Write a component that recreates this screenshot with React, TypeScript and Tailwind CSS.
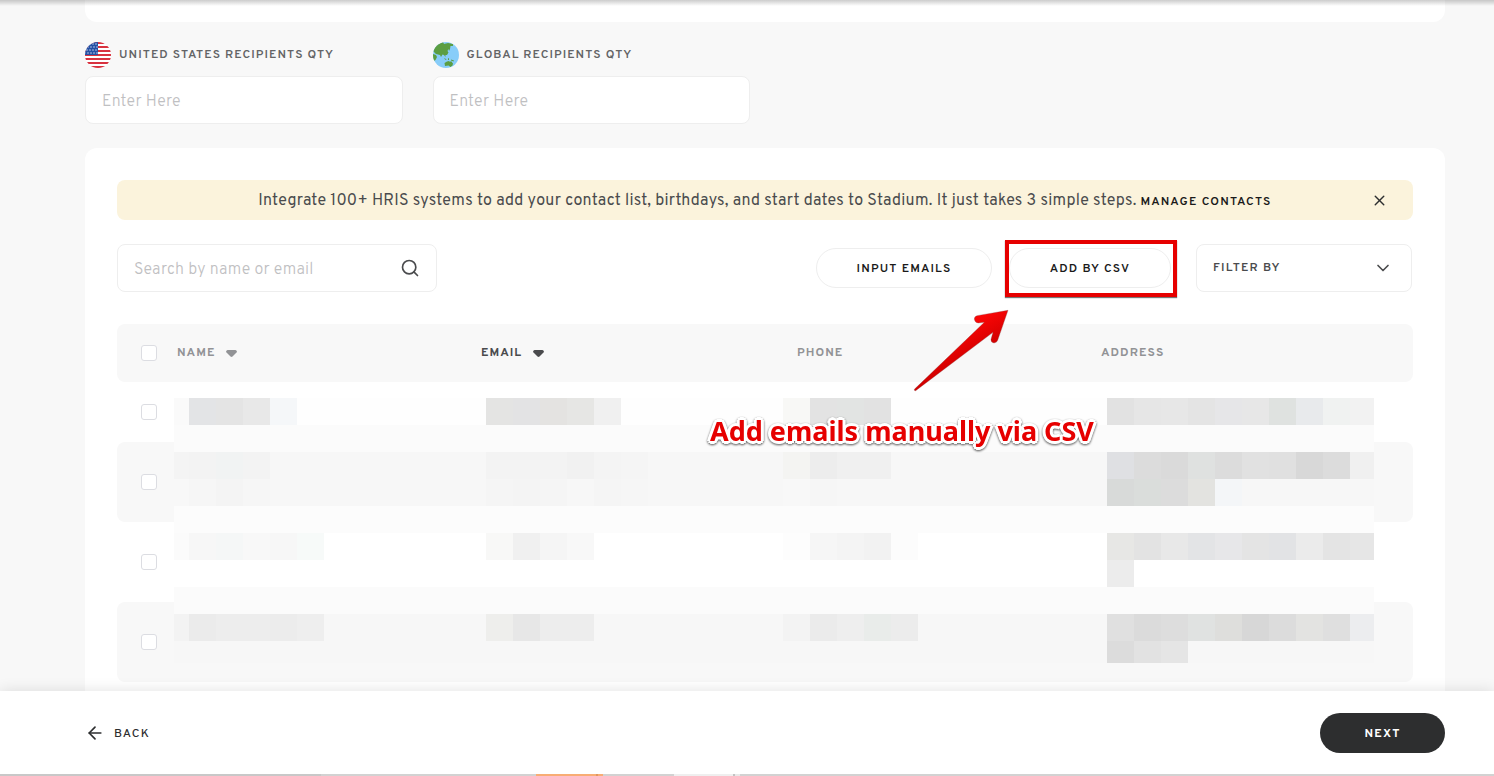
import { useState } from 'react';
import { ArrowLeft, ChevronDown, Search, X } from 'lucide-react';

interface Strip {
  x: number;
  y: number;
  h?: number;
  colors: string[];
}

const CELL = 27;

// Full-width bands of the redacted area, as [y, height, color]
const bands: [number, number, string][] = [
  [0, 27, '#fefefe'],
  [27, 27, '#fbfbfb'],
  [54, 54, '#f7f7f7'],
  [108, 27, '#fcfcfc'],
  [135, 54, '#ffffff'],
  [189, 27, '#fbfbfb'],
  [216, 49, '#f7f7f7'],
];

const strips: Strip[] = [
  // name
  { x: -12, y: 0, colors: ['#fafafa', '#e3e4e6', '#e4e4e4', '#e8e8e8', '#f5f7f9'] },
  { x: -12, y: 54, colors: ['#f4f4f4', '#f3f3f3', '#f1f3f3', '#f3f3f3'] },
  { x: -12, y: 81, colors: ['#f8f8f8', '#f6f6f6', '#f4f4f4', '#f6f6f6'] },
  { x: -12, y: 135, colors: ['#fbfbfb', '#f7f7f7', '#f5f7f7', '#f8f8f8', '#f7f7f7', '#f7faf9'] },
  { x: -12, y: 216, colors: ['#f3f3f3', '#ebebeb', '#ededed', '#ededed', '#ececec', '#eeeeee'] },
  // email
  { x: 312, y: 0, colors: ['#e4e4e3', '#e3e3e4', '#e4e3e1', '#e6e6e4', '#f0f0f0'] },
  { x: 312, y: 54, colors: ['#f3f3f3', '#f3f3f3', '#f3f3f3', '#f1f1f1', '#f4f4f4', '#f5f5f5'] },
  { x: 312, y: 81, colors: ['#f5f5f5', '#f4f4f4', '#f5f5f5', '#f7f7f7', '#f5f5f5', '#f6f6f6'] },
  { x: 312, y: 135, colors: ['#f8f8f7', '#f0f0f0', '#f5f5f5', '#f8f8f8'] },
  { x: 312, y: 216, colors: ['#eeeeec', '#e7e7e7', '#ededed', '#ededed'] },
  // phone
  { x: 609, y: 0, colors: ['#f8f8f6', '#e3e3e3', '#e2e4e3', '#e2e2e2'] },
  { x: 609, y: 54, colors: ['#f4f4f2', '#ededed', '#f0f0f0', '#f0f0f0'] },
  { x: 609, y: 81, colors: ['#f8f8f8', '#f6f6f6', '#f7f7f7', '#f7f7f7'] },
  { x: 609, y: 135, colors: ['#fdfdfd', '#f6f6f6', '#f4f4f4', '#f2f2f2', '#fcfcfc'] },
  { x: 609, y: 216, colors: ['#f3f3f3', '#ebebeb', '#eeeeee', '#e9ecea', '#ececec'] },
  // address
  { x: 933, y: 0, colors: ['#e2e2e2', '#e6e6e6', '#e7e7e7', '#e4e4e4', '#e6e6e8', '#e7e7e7', '#dfe2e0', '#e8eaec', '#f0f2f1', '#f2f2f2'] },
  { x: 933, y: 54, colors: ['#dfe0e3', '#dcdcdc', '#dadada', '#dfe1e0', '#dcdcdc', '#e1e1e1', '#e0e0e0', '#d8d8d8', '#dcdcdc', '#f0f0f0'] },
  { x: 933, y: 81, colors: ['#d8dad9', '#dadddb', '#dcdcdc', '#e3e3e0', '#f4f6f8'] },
  { x: 933, y: 135, colors: ['#e7e7e5', '#e3e3e3', '#e8e8e8', '#e3e4e6', '#e7e7e9', '#e4e4e4', '#e2e3e5', '#ebebeb', '#e4e4e4', '#e6e6e6'] },
  { x: 933, y: 162, colors: ['#ececec'] },
  { x: 933, y: 216, colors: ['#e0e0e0', '#dbdbdb', '#dddddd', '#e0e2e1', '#dededc', '#d7d7d7', '#dcdcdc', '#e3e3e1', '#dfdfdf', '#ecedef'] },
  { x: 933, y: 243, h: 22, colors: ['#dcdcdc', '#e2e2e2', '#e5e5e5'] },
];

const rows = [
  { id: 'row-1', height: 'h-[60px]', shade: '' },
  { id: 'row-2', height: 'h-20', shade: 'bg-[#f8f8f8]' },
  { id: 'row-3', height: 'h-20', shade: '' },
  { id: 'row-4', height: 'h-20', shade: 'bg-[#f8f8f8]' },
];

const checkboxClass =
  'block size-4 appearance-none rounded-[3px] border border-[#dcdde2] bg-white checked:bg-[#2d2e2f]';

function RedactedArea() {
  return (
    <svg
      className="pointer-events-none absolute top-[74px] left-[57px] h-[265px] w-[calc(100%-96px)]"
      viewBox="0 0 1200 265"
      preserveAspectRatio="none"
      shapeRendering="crispEdges"
      aria-hidden="true"
    >
      {bands.map(([y, height, fill]) => (
        <rect key={y} x={0} y={y} width={1200} height={height} fill={fill} />
      ))}
      {strips.map((s) =>
        s.colors.map((fill, i) => (
          <rect
            key={`${s.x}-${s.y}-${i}`}
            x={s.x + i * CELL}
            y={s.y}
            width={CELL}
            height={s.h ?? CELL}
            fill={fill}
          />
        ))
      )}
    </svg>
  );
}

function FlagIcon() {
  return (
    <svg className="size-[26px]" viewBox="0 0 26 26" aria-hidden="true">
      <clipPath id="flag-clip">
        <circle cx="13" cy="13" r="13" />
      </clipPath>
      <g clipPath="url(#flag-clip)">
        <rect width="26" height="26" fill="#fff" />
        {[0, 4, 8, 12, 16, 20, 24].map((y) => (
          <rect key={y} y={y} width="26" height="2" fill="#d8323f" />
        ))}
        <rect width="13" height="13" fill="#2450a4" />
        {[2, 5, 8, 11].map((y) =>
          [2, 5, 8, 11].map((x) => (
            <circle key={`${x}-${y}`} cx={x + (y % 2)} cy={y} r="0.7" fill="#dfe6f5" />
          ))
        )}
      </g>
    </svg>
  );
}

function GlobeIcon() {
  return (
    <svg className="size-[26px]" viewBox="0 0 26 26" aria-hidden="true">
      <clipPath id="globe-clip">
        <circle cx="13" cy="13" r="13" />
      </clipPath>
      <g clipPath="url(#globe-clip)">
        <rect width="26" height="26" fill="#88cdf9" />
        <path
          fill="#5c9e42"
          d="M3 3 L10 0 L11 2 L15 1 L20 2 L20 4 L17.500 4 L17 7 L16 9 L15.500 7 L14.500 9 L15.500 10.500 L14 13 L12.500 13 L12.500 15 L11 13 L9.500 12.500 L8 15 L7 13 L5 12.500 L3 12 L0 9 Z"
        />
        <path fill="#5c9e42" d="M0 12 L3 13 L4 15 L2.500 18 L1 19 L0 18 Z" />
        <path fill="#5c9e42" d="M11.500 16 L13.500 17.500 L13 18 L11.500 17 Z M15 16.500 L16 16 L16 18 L15 18 Z M18 17.500 L21 18.500 L20.500 19.500 L18 18.500 Z" />
        <path fill="#5c9e42" d="M11.500 21 L14 19.500 L16 19 L17 20 L18 19 L20 21.500 L19.500 23.500 L17.500 25 L15.500 23.500 L12 24 Z" />
      </g>
    </svg>
  );
}

function SortIcon() {
  return (
    <svg className="h-[7px] w-[11px]" viewBox="0 0 11 7" fill="currentColor" aria-hidden="true">
      <path d="M1.500 0 H9.500 Q11 0.500 11 2 L6.500 6.500 Q5.500 7.300 4.500 6.500 L0 2 Q0 0.500 1.500 0 Z" />
    </svg>
  );
}

function QuantityField({ id, label, icon }: { id: string; label: string; icon: React.ReactNode }) {
  return (
    <div>
      <label
        htmlFor={id}
        className="flex h-[26px] items-center gap-2 text-xs font-semibold tracking-[0.09em] text-[#636466] whitespace-nowrap"
      >
        {icon}
        {label}
      </label>
      <input
        id={id}
        type="text"
        placeholder="Enter Here"
        className="mt-2 block h-12 w-full rounded-lg border border-[#eeeeee] bg-white px-4 pt-1 text-base font-light tracking-[0.015em] placeholder:text-[#bfc0c2]"
      />
    </div>
  );
}

function CsvAnnotation() {
  return (
    <div className="pointer-events-none absolute -top-2 -left-1 z-10 h-[57px] w-[172px] border-4 border-[#e60000] shadow-[0_1px_1px_#777]">
      <svg className="absolute top-[65px] -left-24 h-[84px] w-24" viewBox="0 0 288 252" aria-hidden="true">
        <defs>
          <linearGradient id="arrow-fill" x1="0.4" y1="0.3" x2="0.6" y2="0.6">
            <stop offset="0" stopColor="#fa0505" />
            <stop offset="1" stopColor="#d00000" />
          </linearGradient>
        </defs>
        <path
          d="M285 4 L192 20 Q183 23 184 31 Q186 42 196 42 L214 40 L4 241 Q3 246 8 245 L240 70 L234 91 Q233 101 243 102 Q252 101 254 94 Z"
          fill="url(#arrow-fill)"
          stroke="#8a5050"
          strokeWidth="1"
        />
      </svg>
      <p className="absolute top-[167px] -left-[299px] font-['Noto_Sans'] text-[27px] leading-10 font-bold whitespace-nowrap text-[#e60000] drop-shadow-[0_1px_1px_#555] [text-shadow:-3px_0_#fff,3px_0_#fff,0_-3px_#fff,0_3px_#fff,2px_2px_#fff,-2px_2px_#fff,2px_-2px_#fff,-2px_-2px_#fff]">
        Add emails manually via CSV
      </p>
    </div>
  );
}

export default function App() {
  const [bannerOpen, setBannerOpen] = useState(true);

  return (
    <div className="relative flex h-screen flex-col overflow-hidden bg-[#f8f8f8] font-[Overpass,Roboto,sans-serif] text-[#4a4b4d]">
      <div className="pointer-events-none absolute inset-x-0 top-0 z-10 h-[6px] bg-linear-to-b from-black/20 to-transparent" />

      <main className="min-h-0 flex-1 overflow-hidden pr-[49px] pl-[85px]">
        <div className="h-[22px] rounded-b-xl bg-white" />

        {/* Recipient quantities */}
        <div className="mt-5 grid grid-cols-4 gap-[30px]">
          <QuantityField id="us-qty" label="UNITED STATES RECIPIENTS QTY" icon={<FlagIcon />} />
          <QuantityField id="global-qty" label="GLOBAL RECIPIENTS QTY" icon={<GlobeIcon />} />
        </div>

        {/* Contacts */}
        <section className="mt-6 rounded-xl bg-white p-8">
          {bannerOpen && (
            <div className="mb-6 grid h-10 grid-cols-[36px_1fr_36px] items-center rounded-lg bg-[#fbf3dc] px-4">
              <p className="col-start-2 pt-0.5 text-center text-base tracking-[0.015em] whitespace-nowrap">
                Integrate 100+ HRIS systems to add your contact list, birthdays, and start dates to Stadium. It just takes 3 simple steps.{' '}
                <a href="#contacts" className="text-xs font-semibold tracking-widest text-[#1a1a1a]">
                  MANAGE CONTACTS
                </a>
              </p>
              <button
                type="button"
                aria-label="Close"
                onClick={() => setBannerOpen(false)}
                className="flex justify-center text-[#2d2e2f]"
              >
                <X className="size-[17px]" strokeWidth={2} />
              </button>
            </div>
          )}

          {/* Toolbar */}
          <div className="flex items-center justify-between pr-px">
            <div className="flex h-12 w-80 items-center rounded-lg border border-[#eeeeee] px-4">
              <input
                type="text"
                aria-label="Search by name or email"
                placeholder="Search by name or email"
                className="min-w-0 flex-1 pt-1 text-base font-light tracking-[0.015em] outline-none placeholder:text-[#bfc0c2]"
              />
              <Search className="size-5" strokeWidth={2} />
            </div>
            <div className="flex items-center">
              <button
                type="button"
                className="h-10 w-44 rounded-full border border-[#eeeeee] pt-0.5 text-xs font-semibold tracking-widest text-[#1a1a1a]"
              >
                INPUT EMAILS
              </button>
              <div className="relative ml-[17px]">
                <button
                  type="button"
                  className="block h-10 w-[162px] rounded-full border border-[#eeeeee] pt-0.5 text-xs font-semibold tracking-widest text-[#1a1a1a]"
                >
                  ADD BY CSV
                </button>
                <CsvAnnotation />
              </div>
              <div className="ml-[25px] flex h-12 w-[216px] items-center rounded-lg border border-[#eeeeee] pr-[18px]">
                <select
                  aria-label="Filter by"
                  className="h-full flex-1 appearance-none bg-transparent pl-4 text-xs font-semibold tracking-widest outline-none"
                >
                  <option>FILTER BY</option>
                </select>
                <ChevronDown className="pointer-events-none size-5" strokeWidth={2} />
              </div>
            </div>
          </div>

          {/* Contact list */}
          <div className="relative mt-8">
            <table className="w-full table-fixed border-separate border-spacing-0 text-left text-xs">
              <thead>
                <tr className="h-[58px] bg-[#f8f8f8] text-[#929396]">
                  <th className="w-[60px] rounded-l-lg pl-6">
                    <input type="checkbox" aria-label="Select all" className={checkboxClass} />
                  </th>
                  <th className="w-[304px] font-bold tracking-[0.09em]">
                    <span className="flex items-center gap-[11px]">
                      NAME <SortIcon />
                    </span>
                  </th>
                  <th className="w-[316px] font-bold tracking-[0.09em] text-[#4a4b4d]">
                    <span className="flex items-center gap-[11px]">
                      EMAIL <SortIcon />
                    </span>
                  </th>
                  <th className="w-[304px] font-bold tracking-[0.09em]">PHONE</th>
                  <th className="rounded-r-lg font-bold tracking-[0.09em]">ADDRESS</th>
                </tr>
              </thead>
              <tbody>
                {rows.map((row, index) => (
                  <tr key={row.id} className={`${row.height} ${row.shade}`}>
                    <td className="rounded-l-lg pl-6">
                      <input type="checkbox" aria-label={`Select contact ${index + 1}`} className={checkboxClass} />
                    </td>
                    <td />
                    <td />
                    <td />
                    <td className="rounded-r-lg" />
                  </tr>
                ))}
              </tbody>
            </table>
            <RedactedArea />
          </div>
        </section>
      </main>

      <footer className="relative z-20 shrink-0 bg-white shadow-[0_0_14px_rgba(0,0,0,0.12)]">
        <div className="flex h-[83px] items-center justify-between pr-[49px] pl-[85px]">
          <button type="button" className="flex items-center gap-[9px] text-xs font-medium tracking-widest text-[#2d2e2f]">
            <ArrowLeft className="size-5" strokeWidth={2} />
            <span className="pt-0.5">BACK</span>
          </button>
          <button
            type="button"
            className="h-10 w-[125px] rounded-full bg-[#2d2e2f] pt-0.5 text-xs font-bold tracking-widest text-white"
          >
            NEXT
          </button>
        </div>
        <div className="flex h-[2px] bg-[#d2d2d2]">
          <div className="w-[321px] bg-[#c8c8c8]" />
          <div className="ml-[215px] w-[60px] bg-[#f8ad74]" />
          <div className="w-[2px] bg-[#df9760]" />
          <div className="w-[5px] bg-[#f8ad74]" />
          <div className="ml-[71px] w-[59px] bg-[#efefef]" />
          <div className="w-[2px] bg-[#c2c2c2]" />
          <div className="w-[5px] bg-[#e8e8e8]" />
        </div>
      </footer>
    </div>
  );
}
